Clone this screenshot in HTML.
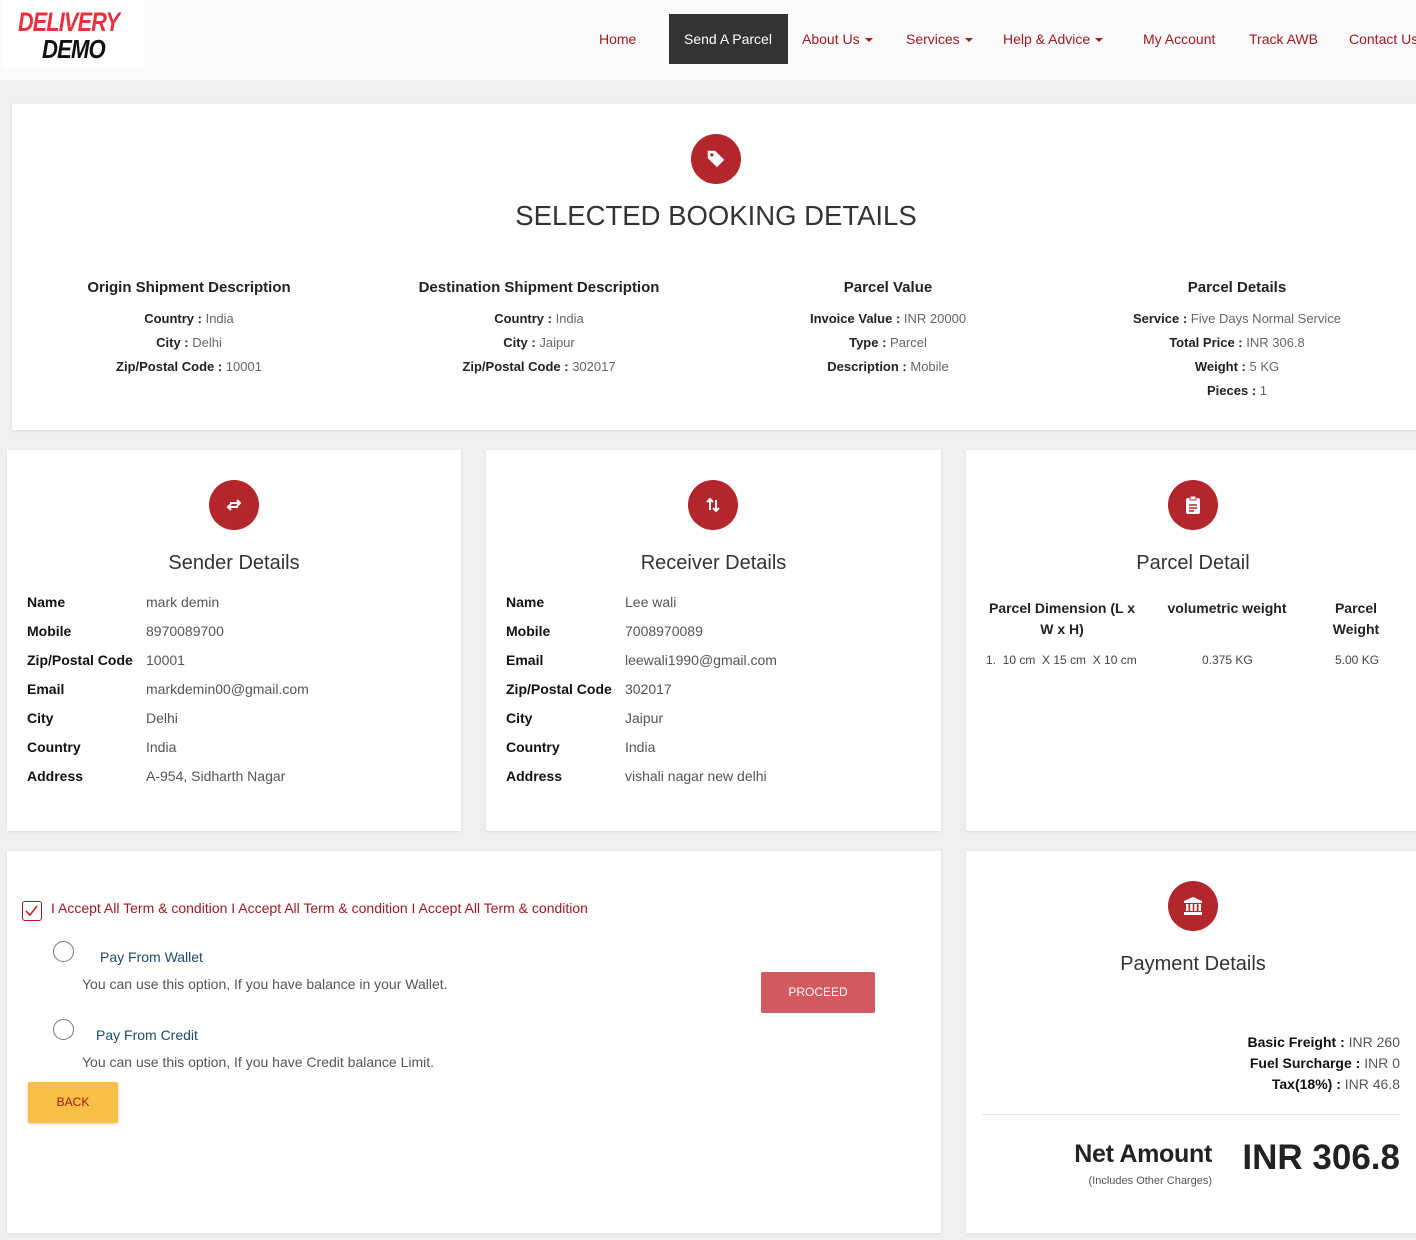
<!DOCTYPE html>
<html><head><meta charset="utf-8"><style>
*{box-sizing:border-box;margin:0;padding:0}
body{width:1416px;height:1240px;overflow:hidden;background:#efefef;font-family:"Liberation Sans",sans-serif;color:#333;position:relative}
.hdr{position:absolute;left:0;top:0;width:1416px;height:80px;background:#fcf9fa}
.logo{position:absolute;left:2px;top:0;width:142px;height:68px;background:#fff}
.logo .a{position:absolute;left:16px;top:9px;font:italic 900 27px/1 "Liberation Sans";color:#e8313c;letter-spacing:-1px;transform:scaleX(.8);transform-origin:left}
.logo .b{position:absolute;left:40px;top:36px;font:italic 900 26px/1 "Liberation Sans";color:#111;letter-spacing:-1px;transform:scaleX(.85);transform-origin:left}
.nav a{position:absolute;top:31px;font-size:14px;color:#a01a22;text-decoration:none;white-space:nowrap}
.nav .act{top:14px;height:50px;background:#333;color:#fff;padding:17px 15px 0;left:669px;width:119px}
.car{display:inline-block;border-top:4px solid #a01a22;border-left:4px solid transparent;border-right:4px solid transparent;vertical-align:middle;margin-left:5px}
.card{position:absolute;background:#fff;box-shadow:0 1px 3px rgba(0,0,0,.08)}
.ic{position:absolute;width:50px;height:50px;border-radius:50%;background:#b3262b;display:flex;align-items:center;justify-content:center}
.t{position:absolute;text-align:center;font-size:20px;color:#333;white-space:nowrap}
.col{position:absolute;text-align:center;font-size:13px;line-height:24px;color:#666;transform:translateX(-50%);white-space:nowrap}
.col h4{font-size:15px;color:#222;margin-bottom:7px}
.col b{color:#222}
.kv{position:absolute;font-size:14px;line-height:29px}
.kv div{display:flex}.kv b{width:119px;color:#111}.kv span{color:#555}
</style></head><body>
<div class="hdr">
<div class="logo"><div class="a">DELIVERY</div><div class="b">DEMO</div></div>
<div class="nav">
<a style="left:599px">Home</a>
<a class="act">Send A Parcel</a>
<a style="left:802px">About Us<i class="car"></i></a>
<a style="left:906px">Services<i class="car"></i></a>
<a style="left:1003px">Help &amp; Advice<i class="car"></i></a>
<a style="left:1143px">My Account</a>
<a style="left:1249px">Track AWB</a>
<a style="left:1349px">Contact Us</a>
</div></div>

<div class="card" style="left:12px;top:104px;width:1410px;height:326px">
<div class="ic" style="left:679px;top:30px"><svg width="22" height="22" viewBox="0 0 24 24"><path d="M3 3h8l10 10-8 8L3 11z" fill="#fff"/><circle cx="7.5" cy="7.5" r="1.8" fill="#b3262b"/></svg></div>
<div class="t" style="left:0;width:1408px;top:96px;font-size:27.5px">SELECTED BOOKING DETAILS</div>
<div class="col" style="left:177px;top:172px"><h4>Origin Shipment Description</h4><b>Country :</b> India<br><b>City :</b> Delhi<br><b>Zip/Postal Code :</b> 10001</div>
<div class="col" style="left:527px;top:172px"><h4>Destination Shipment Description</h4><b>Country :</b> India<br><b>City :</b> Jaipur<br><b>Zip/Postal Code :</b> 302017</div>
<div class="col" style="left:876px;top:172px"><h4>Parcel Value</h4><b>Invoice Value :</b> INR 20000<br><b>Type :</b> Parcel<br><b>Description :</b> Mobile</div>
<div class="col" style="left:1225px;top:172px"><h4>Parcel Details</h4><b>Service :</b> Five Days Normal Service<br><b>Total Price :</b> INR 306.8<br><b>Weight :</b> 5 KG<br><b>Pieces :</b> 1</div>
</div>

<div class="card" style="left:7px;top:450px;width:454px;height:381px">
<div class="ic" style="left:202px;top:30px"><svg width="20" height="20" viewBox="0 0 20 20" fill="none" stroke="#fff" stroke-width="2"><path d="M6 8h10M13 5l3 3-3 3M14 12H4M7 9l-3 3 3 3"/></svg></div>
<div class="t" style="left:0;width:454px;top:102px">Sender Details</div>
<div class="kv" style="left:20px;top:138px"><div><b>Name</b><span>mark demin</span></div><div><b>Mobile</b><span>8970089700</span></div><div><b>Zip/Postal Code</b><span>10001</span></div><div><b>Email</b><span>markdemin00@gmail.com</span></div><div><b>City</b><span>Delhi</span></div><div><b>Country</b><span>India</span></div><div><b>Address</b><span>A-954, Sidharth Nagar</span></div></div>
</div>
<div class="card" style="left:486px;top:450px;width:455px;height:381px">
<div class="ic" style="left:202px;top:30px"><svg width="20" height="20" viewBox="0 0 20 20" fill="none" stroke="#fff" stroke-width="2"><path d="M7 15V4M4 7l3-3 3 3M13 5v11M10 13l3 3 3-3"/></svg></div>
<div class="t" style="left:0;width:455px;top:102px">Receiver Details</div>
<div class="kv" style="left:20px;top:138px"><div><b>Name</b><span>Lee wali</span></div><div><b>Mobile</b><span>7008970089</span></div><div><b>Email</b><span>leewali1990@gmail.com</span></div><div><b>Zip/Postal Code</b><span>302017</span></div><div><b>City</b><span>Jaipur</span></div><div><b>Country</b><span>India</span></div><div><b>Address</b><span>vishali nagar new delhi</span></div></div>
</div>
<div class="card" style="left:966px;top:450px;width:460px;height:381px">
<div class="ic" style="left:202px;top:30px"><svg width="20" height="20" viewBox="0 0 20 20"><rect x="3" y="3" width="14" height="16" rx="2" fill="#fff"/><rect x="7" y="1" width="6" height="4" rx="1" fill="#fff" stroke="#b3262b"/><path d="M6 10h8M6 13h8M6 16h5" stroke="#b3262b" stroke-width="1.6"/></svg></div>
<div class="t" style="left:0;width:454px;top:102px">Parcel Detail</div>
<div style="position:absolute;left:16px;top:148px;width:160px;text-align:center;font-size:14px;font-weight:bold;line-height:21px;color:#222">Parcel Dimension (L x W x H)</div>
<div style="position:absolute;left:196px;top:148px;width:130px;text-align:center;font-size:14px;font-weight:bold;color:#222;line-height:21px">volumetric weight</div>
<div style="position:absolute;left:350px;top:148px;width:80px;text-align:center;font-size:14px;font-weight:bold;color:#222;line-height:21px">Parcel Weight</div>
<div style="position:absolute;left:20px;top:203px;font-size:12px;color:#444;white-space:nowrap">1.&nbsp; 10 cm &nbsp;X 15 cm &nbsp;X 10 cm</div>
<div style="position:absolute;left:236px;top:203px;font-size:12px;color:#444">0.375 KG</div>
<div style="position:absolute;left:369px;top:203px;font-size:12px;color:#444">5.00 KG</div>
</div>

<div class="card" style="left:7px;top:851px;width:934px;height:382px">
<div style="position:absolute;left:15px;top:50px;width:20px;height:20px;border:1.5px solid #a01a22;border-radius:3px"><svg width="17" height="17" viewBox="0 0 17 17"><path d="M3 9l4 4 7-9" fill="none" stroke="#c0262d" stroke-width="1.6"/></svg></div>
<div style="position:absolute;left:44px;top:49px;font-size:14px;color:#a01a22;white-space:nowrap">I Accept All Term &amp; condition I Accept All Term &amp; condition I Accept All Term &amp; condition</div>
<div style="position:absolute;left:46px;top:90px;width:21px;height:21px;border:1px solid #777;border-radius:50%"></div>
<div style="position:absolute;left:93px;top:98px;font-size:14px;color:#1d4a6e">Pay From Wallet</div>
<div style="position:absolute;left:75px;top:125px;font-size:14px;color:#555">You can use this option, If you have balance in your Wallet.</div>
<div style="position:absolute;left:46px;top:168px;width:21px;height:21px;border:1px solid #777;border-radius:50%"></div>
<div style="position:absolute;left:89px;top:176px;font-size:14px;color:#1d4a6e">Pay From Credit</div>
<div style="position:absolute;left:75px;top:203px;font-size:14px;color:#555">You can use this option, If you have Credit balance Limit.</div>
<div style="position:absolute;left:21px;top:231px;width:90px;height:41px;background:#f8bf45;border-radius:2px;box-shadow:0 1px 3px rgba(0,0,0,.2);font-size:12px;color:#a01a22;text-align:center;line-height:41px">BACK</div>
<div style="position:absolute;left:754px;top:121px;width:114px;height:41px;background:#d05a5e;border-radius:2px;font-size:12px;color:#fff;text-align:center;line-height:41px">PROCEED</div>
</div>
<div class="card" style="left:966px;top:851px;width:460px;height:382px">
<div class="ic" style="left:202px;top:30px"><svg width="22" height="22" viewBox="0 0 22 22" fill="#fff"><path d="M11 2l9 4v2H2V6z"/><rect x="4" y="9" width="2.5" height="7"/><rect x="8.2" y="9" width="2.5" height="7"/><rect x="12.3" y="9" width="2.5" height="7"/><rect x="16.5" y="9" width="2.5" height="7"/><rect x="2" y="17" width="18" height="3"/></svg></div>
<div class="t" style="left:0;width:454px;top:102px">Payment Details</div>
<div style="position:absolute;right:26px;top:181px;text-align:right;font-size:14px;line-height:21px;color:#555"><b style="color:#111">Basic Freight :</b> INR 260<br><b style="color:#111">Fuel Surcharge :</b> INR 0<br><b style="color:#111">Tax(18%) :</b> INR 46.8</div>
<div style="position:absolute;left:16px;top:263px;width:418px;border-top:1px solid #e5e5e5"></div>
<div style="position:absolute;left:80px;top:289px;width:166px;text-align:right;font-size:25px;font-weight:bold;color:#222;letter-spacing:-.3px">Net Amount</div>
<div style="position:absolute;left:80px;top:324px;width:166px;text-align:right;font-size:11px;color:#555">(Includes Other Charges)</div>
<div style="position:absolute;left:270px;top:287px;width:164px;text-align:right;font-size:35px;font-weight:bold;color:#222;white-space:nowrap">INR 306.8</div>
</div>
</body></html>
